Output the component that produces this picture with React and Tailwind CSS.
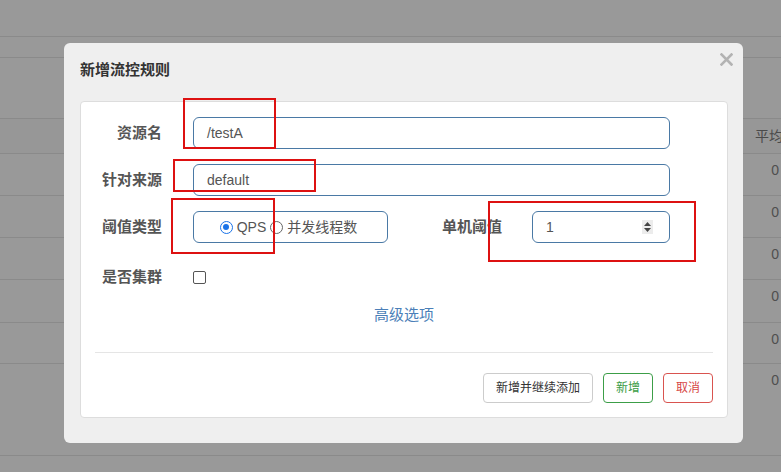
import React from 'react';

const font = { fontFamily: '"Liberation Sans", "Noto Sans CJK SC", sans-serif' };

// background table rows (behind the dialog)
const rows = [42, 42, 42, 43, 41, 92];

function Radio({ checked }) {
  return checked ? (
    <span className="w-[13px] h-[13px] rounded-full border-[1.5px] border-[#1a73e8] bg-white flex items-center justify-center">
      <span className="w-[6px] h-[6px] rounded-full bg-[#1a73e8]" />
    </span>
  ) : (
    <span className="w-[13px] h-[13px] rounded-full border border-[#666] bg-white" />
  );
}

function Label({ children, className = 'w-[81px]' }) {
  return (
    <div className={`${className} text-right text-[15px] leading-[20px] font-bold text-[#555]`}>
      {children}
    </div>
  );
}

export default function App() {
  return (
    <div className="relative w-[781px] h-[472px] overflow-hidden bg-[#999999]" style={font}>
      {/* page behind the backdrop */}
      <div className="h-[37px] border-b border-[#8a8a8a]" />
      <div className="h-[21px] border-b border-[#8a8a8a]" />
      <div className="h-[61px] border-b border-[#8a8a8a]" />
      <div className="h-[35px] border-b border-[#8a8a8a] bg-[#979797] flex items-center pl-[755px]">
        <span className="whitespace-nowrap text-[14px] text-[#4a4a4a]">平均</span>
      </div>
      {rows.map((h, i) => (
        <div
          key={i}
          className="border-b border-[#8a8a8a] flex justify-end pr-[2px] pt-[6px]"
          style={{ height: h }}
        >
          <span className="text-[14px] leading-[20px] text-[#4f4f4f]">0</span>
        </div>
      ))}

      {/* dialog */}
      <div className="absolute left-[64px] top-[43px] w-[679px] h-[400px] rounded-[6px] bg-[#efefef] flex flex-col">
        <div className="h-[58px] flex justify-between items-start pl-[16px] pr-[10px]">
          <h3 className="mt-[17px] text-[15px] leading-[20px] font-bold text-[#333]">新增流控规则</h3>
          <svg className="mt-[10px]" width="13" height="13" viewBox="0 0 13 13">
            <path d="M1.5 1.5 L11.5 11.5 M11.5 1.5 L1.5 11.5" stroke="#b3b3b3" strokeWidth="2.6" strokeLinecap="square" />
          </svg>
        </div>

        <div className="ml-[16px] mr-[15px] h-[317px] bg-white border border-[#dddddd] rounded-[4px] flex flex-col pt-[15px]">
          <div className="flex items-center h-[32px]">
            <Label>资源名</Label>
            <div className="ml-[31px] w-[477px] h-[32px] border border-[#4a79a5] rounded-[6px] pl-[13px] flex items-center text-[14px] text-[#555]">
              /testA
            </div>
          </div>

          <div className="flex items-center h-[32px] mt-[15px]">
            <Label>针对来源</Label>
            <div className="ml-[31px] w-[477px] h-[32px] border border-[#4a79a5] rounded-[6px] pl-[13px] flex items-center text-[14px] text-[#555]">
              default
            </div>
          </div>

          <div className="flex items-center h-[32px] mt-[15px]">
            <Label>阈值类型</Label>
            <div className="ml-[31px] w-[195px] h-[32px] border border-[#4a79a5] rounded-[6px] flex items-center justify-center pr-[4px] text-[14px] text-[#555]">
              <Radio checked />
              <span className="ml-[4px] mr-[4px]">QPS</span>
              <Radio />
              <span className="ml-[4px]">并发线程数</span>
            </div>
            <Label className="w-[114px]">单机阈值</Label>
            <div className="ml-[30px] w-[138px] h-[32px] border border-[#4a79a5] rounded-[6px] pl-[13px] pr-[16px] flex items-center justify-between text-[14px] text-[#555]">
              <span>1</span>
              <svg width="11" height="14" viewBox="0 0 11 14">
                <rect width="11" height="14" fill="#ececec" />
                <path d="M2 6 L5.5 2 L9 6 Z M2 8 L5.5 12 L9 8 Z" fill="#444" />
              </svg>
            </div>
          </div>

          <div className="flex items-center h-[32px] mt-[18px]">
            <Label>是否集群</Label>
            <span className="ml-[31px] w-[13px] h-[13px] rounded-[2px] border border-[#555] bg-white" />
          </div>

          <div className="mt-[12px] text-center text-[15px] leading-[20px] text-[#4b7fb8]">高级选项</div>

          <div className="mt-[27px] mx-[14px] border-t border-[#e5e5e5]" />

          <div className="mt-[20px] mr-[14px] flex justify-end gap-[10px] text-[12px]">
            <button className="h-[30px] px-[12px] rounded-[4px] border border-[#cccccc] bg-white text-[#333]">新增并继续添加</button>
            <button className="h-[30px] px-[12px] rounded-[4px] border border-[#3c9e48] bg-white text-[#3b9c45]">新增</button>
            <button className="h-[30px] px-[12px] rounded-[4px] border border-[#d9534f] bg-white text-[#d64545]">取消</button>
          </div>
        </div>
      </div>

      {/* red annotation boxes */}
      <div className="absolute left-[183px] top-[98px] w-[93px] h-[51px] border-2 border-[#dd1111]" />
      <div className="absolute left-[173px] top-[159px] w-[143px] h-[33px] border-2 border-[#dd1111]" />
      <div className="absolute left-[171px] top-[198px] w-[104px] h-[56px] border-2 border-[#dd1111]" />
      <div className="absolute left-[488px] top-[201px] w-[208px] h-[61px] border-2 border-[#dd1111]" />
    </div>
  );
}
